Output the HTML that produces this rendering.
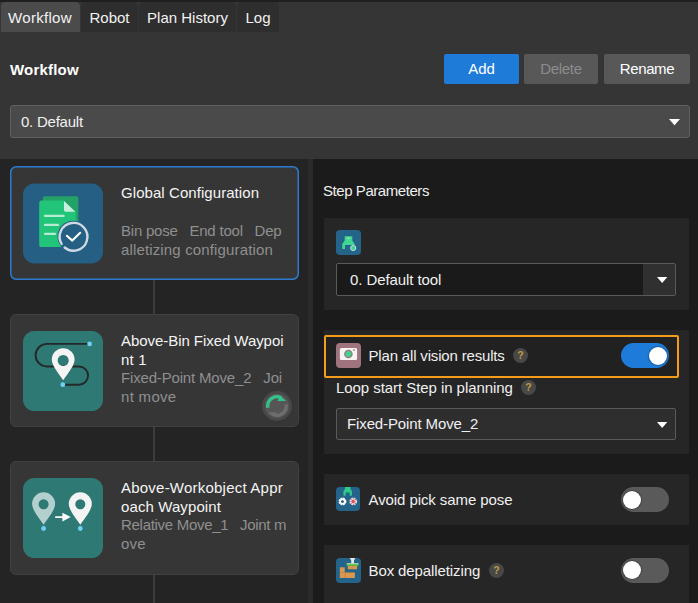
<!DOCTYPE html>
<html><head><meta charset="utf-8">
<style>
*{box-sizing:border-box;margin:0;padding:0}
html,body{width:698px;height:603px;overflow:hidden;background:#353535;font-family:"Liberation Sans","DejaVu Sans",sans-serif;color:#f0f0f0;font-size:15px}
.abs{position:absolute}
#topstrip{left:0;top:0;width:698px;height:2px;background:#1f1f1f}
.tab{position:absolute;top:2px;height:30px;background:#2e2e2e;border:1px solid #2e2e2e;border-radius:4px 4px 0 0;line-height:29px;text-align:center;font-size:15px;color:#f2f2f2}
.tab.active{background:#4b4b4b;border-color:#4b4b4b}
#title{left:10px;top:61px;letter-spacing:.2px;font-weight:bold;font-size:15px;color:#fff}
.btn{position:absolute;top:54px;height:30px;line-height:30px;text-align:center;font-size:15px;border-radius:2px}
#dd{left:10px;top:105px;width:680px;height:33px;letter-spacing:-.24px;background:#4a4a4a;border:1px solid #606060;border-radius:3px;line-height:31px;padding-left:10px;font-size:15px}
.caret{position:absolute;width:0;height:0;border-left:5px solid transparent;border-right:5px solid transparent;border-top:6px solid #fff}
#left{left:0;top:159px;width:308px;height:444px;background:#242424}
#split{left:308px;top:159px;width:5px;height:444px;background:#2b2b2b}
#right{left:313px;top:159px;width:385px;height:444px;background:#1b1b1b}
.card{position:absolute;left:10px;width:289px;height:114px;background:#363636;border:1px solid #414141;border-radius:6px}
.card.sel{border:1px solid #363636}
.ico{position:absolute;left:13px;top:17px;width:80px;height:80px}
.ct{position:absolute;left:110px;font-size:15px;line-height:19px;color:#f4f4f4;white-space:nowrap}
.cs{position:absolute;left:110px;font-size:15px;line-height:19px;color:#8f8f8f;white-space:pre}
.conn{position:absolute;left:153px;width:2px;background:#3c3c3c}
.grp{position:absolute;left:11px;width:365px;background:#262626}
.lbl{position:absolute;font-size:15px;line-height:20px;color:#f0f0f0;white-space:nowrap}
.q{position:absolute;width:15px;height:15px;border-radius:8px;background:#484848;color:#bf9b40;font-size:10.5px;font-weight:bold;line-height:15px;text-align:center}
.tog{position:absolute;left:297px;width:48px;height:25px;border-radius:13px;background:#5a5a5a}
.tog i{position:absolute;top:3.5px;left:2px;width:18px;height:18px;border-radius:9px;background:#fff;box-shadow:0 0 1px 1px rgba(0,0,0,.25)}
.tog.on{background:#1e7bd9}
.tog.on i{left:28px}
.sico{position:absolute;left:12px;width:25px;height:25px}
.cb{position:absolute;left:12px;width:340px;height:33px;border:1px solid #5a5a5a;border-radius:2px;font-size:15px;line-height:31px;padding-left:13px;color:#f0f0f0}
</style></head><body>
<div class="abs" id="topstrip"></div>
<div class="tab active" style="left:1px;width:79px;letter-spacing:.3px;padding-right:1px">Workflow</div>
<div class="tab" style="left:81px;width:57px">Robot</div>
<div class="tab" style="left:139px;width:97px">Plan History</div>
<div class="tab" style="left:237px;width:42px">Log</div>
<div class="abs" id="title">Workflow</div>
<div class="btn" style="left:444px;width:75px;background:#1f7bd8;color:#fff">Add</div>
<div class="btn" style="left:524px;width:74px;background:#585858;color:#8c8c8c;letter-spacing:-.3px">Delete</div>
<div class="btn" style="left:604px;width:86px;background:#585858;color:#fff;letter-spacing:-.4px">Rename</div>
<div class="abs" id="dd">0. Default<svg style="position:absolute;left:658px;top:13px;width:12px;height:7px" viewBox="0 0 12 7"><path d="M0 0H11L5.500 6.200z" fill="#fff"/></svg></div>

<div class="abs" id="left">
  <div class="card sel" style="top:7px">
    <svg style="position:absolute;left:-1px;top:-1px;width:289px;height:114px" viewBox="0 0 289 114"><rect x=".75" y=".75" width="287.5" height="112.5" rx="5.5" fill="none" stroke="#2b7bd0" stroke-width="1.5"/></svg>
    <svg class="ico" style="left:12px;top:16px;height:81px" viewBox="0 0 80 81"><g transform="translate(0,.4)">
      <rect width="80" height="80" rx="11.5" fill="#255f84"/>
      <rect x="19.8" y="12.8" width="35.6" height="44" rx="2.2" fill="#24a166"/>
      <path d="M18.4 17.2 H40.8 L52.8 28.5 V61.5 a2.2 2.2 0 0 1 -2.2 2.2 H18.4 a2.2 2.2 0 0 1 -2.2 -2.2 V19.4 a2.2 2.2 0 0 1 2.2 -2.2z" fill="#22c47a"/>
      <path d="M41 17.6 L52.4 28.3 H42.6 a1.6 1.6 0 0 1 -1.6 -1.6z" fill="#c6efdc"/>
      <g stroke="#b5ebd2" stroke-width="2.3" stroke-linecap="round">
        <line x1="22" y1="32.5" x2="40.6" y2="32.5"/>
        <line x1="22" y1="41.5" x2="35" y2="41.5"/>
        <line x1="22" y1="50.4" x2="32" y2="50.4"/>
      </g>
      <circle cx="50.1" cy="53" r="15.6" fill="#255f84"/>
      <path d="M41.6 64.1 A13.9 13.9 0 1 0 38.6 60.6" fill="none" stroke="#cfd9e3" stroke-width="2.4" stroke-linecap="round" transform="rotate(0 50.1 53)"/>
      <path d="M43.9 52.4 L49.3 57.2 L57.2 49.4" fill="none" stroke="#fff" stroke-width="2.1" stroke-linecap="round" stroke-linejoin="round"/>
    </g></svg>
    <div class="ct" style="top:16px;letter-spacing:.065px">Global Configuration</div>
    <div class="cs" style="top:54px;letter-spacing:-.22px">Bin pose   End tool   Dep</div>
    <div class="cs" style="top:73px;letter-spacing:.146px">alletizing configuration</div>
  </div>
  <div class="conn" style="top:121px;height:34px"></div>
  <div class="card" style="top:155px;height:113px">
    <svg class="ico" style="left:12px;top:16px" viewBox="0 0 80 80">
      <rect width="80" height="80" rx="11.5" fill="#2f7975"/>
      <path d="M66.6 12.9 H23.9 a11.3 11.3 0 0 0 0 22.6 H56 a9.1 9.1 0 0 1 0 18.2 H39.8" fill="none" stroke="#232829" stroke-width="1.9"/>
      <circle cx="66.6" cy="12.9" r="2.4" fill="#6fd0f5"/>
      <circle cx="39.8" cy="53.7" r="2.4" fill="#6fd0f5"/>
      <path d="M40.2 17.2 a11.4 11.4 0 0 1 11.4 11.4 C51.6 35.1 44.400000000000006 42.8 40.2 49.3 C36.0 42.8 28.800000000000004 35.1 28.800000000000004 28.6 a11.4 11.4 0 0 1 11.4 -11.4z M40.2 23.9 a5.5 5.5 0 1 0 0.001 0z" fill="#f4f4f5" fill-rule="evenodd"/>
    </svg>
    <div class="ct" style="top:16px;letter-spacing:-.055px">Above-Bin Fixed Waypoi</div>
    <div class="ct" style="top:35px;letter-spacing:.2px">nt 1</div>
    <div class="cs" style="top:53px;letter-spacing:-.17px">Fixed-Point Move_2   Joi</div>
    <div class="cs" style="top:72px;letter-spacing:.31px">nt move</div>
    <svg style="position:absolute;left:250px;top:75px;width:32px;height:32px" viewBox="0 0 32 32">
      <circle cx="16" cy="16" r="15" fill="#484848"/>
      <circle cx="16" cy="16" r="12.2" fill="#565656"/>
      <path d="M6.9 17.7 A9.2 9.2 0 0 1 20 7.7" fill="none" stroke="#35c28a" stroke-width="3.3"/>
      <path d="M16.5 11 H25.1 L19.1 5.4z" fill="#35c28a"/>
      <path d="M25.1 14.4 A9.2 9.2 0 0 1 12 24.3" fill="none" stroke="#6e6e6e" stroke-width="3.3"/>
      <path d="M15.8 22.2 H6.8 L12 26.3z" fill="#6e6e6e"/>
    </svg>
  </div>
  <div class="conn" style="top:268px;height:34px"></div>
  <div class="card" style="top:302px;height:114px">
    <svg class="ico" style="left:12px;top:16px" viewBox="0 0 80 80">
      <rect width="80" height="80" rx="11.5" fill="#2f7975"/>
      <path d="M20.6 14.3 a11.5 11.5 0 0 1 11.5 11.5 C32.1 32.3 24.8 40.3 20.6 46.8 C16.400000000000002 40.3 9.100000000000001 32.3 9.100000000000001 25.8 a11.5 11.5 0 0 1 11.5 -11.5z M20.6 21.3 a5 5 0 1 0 0.001 0z" fill="#b3cfce" fill-rule="evenodd"/>
      <path d="M57.3 14.3 a11.5 11.5 0 0 1 11.5 11.5 C68.8 32.3 61.5 40.3 57.3 46.8 C53.099999999999994 40.3 45.8 32.3 45.8 25.8 a11.5 11.5 0 0 1 11.5 -11.5z M57.3 21.3 a5 5 0 1 0 0.001 0z" fill="#f4f4f5" fill-rule="evenodd"/>
      <path d="M32.200 38.300 H39.400 V34.700 L47.700 39.100 L39.400 43.600 V39.900 H32.200z" fill="#fff"/>
      <circle cx="20.600" cy="50.500" r="2.400" fill="#6fd0f5"/>
      <circle cx="57.300" cy="50.500" r="2.400" fill="#6fd0f5"/>
    </svg>
    <div class="ct" style="top:16px;letter-spacing:.22px">Above-Workobject Appr</div>
    <div class="ct" style="top:35px;letter-spacing:.1px">oach Waypoint</div>
    <div class="cs" style="top:53px;letter-spacing:-.29px">Relative Move_1   Joint m</div>
    <div class="cs" style="top:72px;letter-spacing:.23px">ove</div>
  </div>
  <div class="conn" style="top:416px;height:31px"></div>
</div>
<div class="abs" id="split"></div>
<div class="abs" id="right">
  <div class="lbl" style="left:10px;top:22px;letter-spacing:-.44px">Step Parameters</div>

  <div class="grp" style="top:59px;height:92px">
    <svg class="sico" style="top:12px" viewBox="0 0 25 25">
      <rect width="25" height="25" rx="4" fill="#256489"/>
      <path d="M8.700 6.200 H16.300 V10.500 L18.600 14 V15 H9 V18.900 H6.200 V14 L8.700 10.500z" fill="#3fd68f"/>
      <rect x="10.800" y="7.400" width="3.400" height="1.300" rx=".6" fill="#9fe8c4"/>
      <circle cx="17.200" cy="18" r="2.600" fill="#3fd68f" stroke="#c9dbe6" stroke-width="1"/>
    </svg>
    <div class="cb" style="top:45px;background:#1a1a1a;letter-spacing:-.08px">0. Default tool
      <div style="position:absolute;right:0;top:0;width:32px;height:31px;background:#303030"></div>
      <svg style="position:absolute;left:319.600px;top:13.200px;width:11px;height:7px" viewBox="0 0 11 7"><path d="M0 0H10.300L5.150 6z" fill="#fff"/></svg>
    </div>
  </div>

  <div class="grp" style="top:171px;height:124px">
    <div style="position:absolute;left:0;top:5px;width:355px;height:43px;border:2px solid #f59c1a;border-radius:2px;background:#212121"></div>
    <svg class="sico" style="top:13px" viewBox="0 0 25 25">
      <rect width="25" height="25" rx="4" fill="#a0747e"/>
      <rect x="3.900" y="5.100" width="17.200" height="12" rx="1.500" fill="#f6f4f5"/>
      <circle cx="12.400" cy="11" r="4.300" fill="#a0747e"/>
      <circle cx="12.400" cy="11" r="2.900" fill="#3dd68c"/>
      <circle cx="18" cy="7.100" r="1" fill="#b08a92"/>
    </svg>
    <div class="lbl" style="left:44.5px;top:16px;letter-spacing:-.17px">Plan all vision results</div>
    <div class="q" style="left:189px;top:18px">?</div>
    <div class="tog on" style="top:13px"><i></i></div>
    <div class="lbl" style="left:12px;top:48px;letter-spacing:-.06px">Loop start Step in planning</div>
    <div class="q" style="left:197px;top:50px">?</div>
    <div class="cb" style="top:78px;height:32px;background:#2e2e2e;padding-left:10px;line-height:30px;letter-spacing:-.12px">Fixed-Point Move_2
      <svg style="position:absolute;left:319.600px;top:13.200px;width:11px;height:7px" viewBox="0 0 11 7"><path d="M0 0H10.300L5.150 6z" fill="#fff"/></svg>
    </div>
  </div>

  <div class="grp" style="top:315px;height:51px">
    <svg class="sico" style="top:13px;width:24px;height:24px" viewBox="0 0 24 24">
      <rect width="24" height="24" rx="4" fill="#24638a"/>
      <path d="M9 0 H14.400 V2.200 C16.300 3 16.300 6.500 15.700 8.700 H13.700 V5.500 H9.700 V8.700 H7.700 C7.100 6.500 7.100 3 9 2.200z" fill="#2fc98a"/>
      <circle cx="6.500" cy="14.500" r="2.700" fill="none" stroke="#fff" stroke-width="2.400" stroke-dasharray="1.600 0.520"/>
      <circle cx="6.500" cy="14.500" r="2.300" fill="none" stroke="#fff" stroke-width="1.400"/>
      <circle cx="17.200" cy="14.500" r="2.700" fill="none" stroke="#e8d4d6" stroke-width="2.400" stroke-dasharray="1.600 0.520"/>
      <circle cx="17.200" cy="14.500" r="2.200" fill="#d9555b" stroke="#f0c8ca" stroke-width="1"/>
    </svg>
    <div class="lbl" style="left:44.5px;top:16px;letter-spacing:-.085px">Avoid pick same pose</div>
    <div class="tog" style="top:13px"><i></i></div>
  </div>

  <div class="grp" style="top:386px;height:58px">
    <svg class="sico" style="top:13px" viewBox="0 0 25 25">
      <rect width="25" height="25" rx="4" fill="#24638a"/>
      <path d="M13.800 0 H19.400 L18 2.500 V5.600 H15.200 V2.500z" fill="#e4e6e8"/>
      <rect x="10.700" y="5.600" width="11.800" height="2.300" fill="#4fbf3a"/>
      <rect x="10.700" y="5.400" width="11.800" height=".8" fill="#e8f0e4"/>
      <rect x="11.800" y="7.900" width="9.300" height="3.400" fill="#d9974f"/>
      <rect x="3.900" y="9.300" width="4.800" height="10.700" fill="#d9974f"/>
      <rect x="3.900" y="14.700" width="15" height="5.300" fill="#d9974f"/>
      <rect x="3.900" y="14.300" width="15" height=".6" fill="#c08040"/>
      <rect x="8.700" y="14.700" width=".6" height="5.300" fill="#c08040"/>
      <rect x="16.300" y="7.900" width=".5" height="3.400" fill="#c08040"/>
    </svg>
    <div class="lbl" style="left:44.5px;top:16px;letter-spacing:-.1px">Box depalletizing</div>
    <div class="q" style="left:165px;top:18px">?</div>
    <div class="tog" style="top:12.500px"><i></i></div>
  </div>
</div>
</body></html>
